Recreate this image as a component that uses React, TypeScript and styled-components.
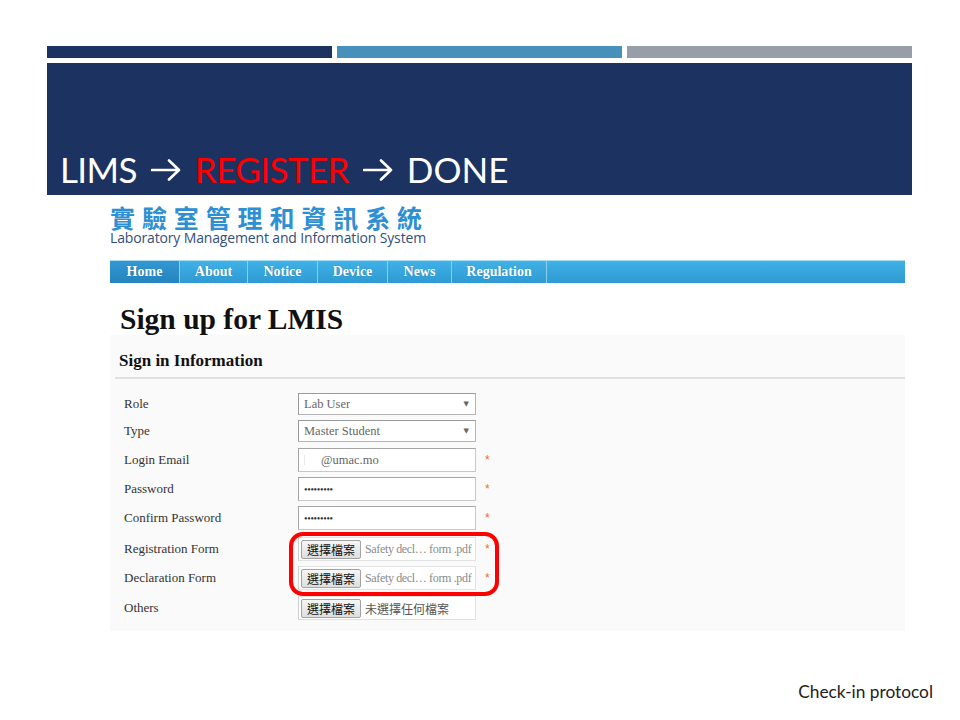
import React from "react";
import styled, { createGlobalStyle } from "styled-components";

const Global = createGlobalStyle`
  html, body { margin: 0; padding: 0; background: #fff; }
  body { font-family: "Liberation Serif", serif; }
`;

const Slide = styled.div`
  position: relative;
  width: 960px;
  height: 720px;
  box-sizing: border-box;
  padding-top: 46px;
  display: flex;
  flex-direction: column;
  overflow: hidden;
  background: #fff;
`;

const TopBars = styled.div`
  display: flex;
  gap: 5px;
  margin: 0 48px 0 47px;
  height: 12px;
`;

const Bar = styled.div<{ $c: string }>`
  flex: 1;
  background: ${(p) => p.$c};
`;

const TitleBox = styled.div`
  margin: 5px 48px 0 47px;
  height: 132px;
  box-sizing: border-box;
  background: #1c3260;
  display: flex;
  align-items: flex-end;
  padding: 0 0 8px 13px;
`;

const TitleText = styled.div`
  display: flex;
  align-items: center;
  gap: 14px;
  font-family: Lato, "Open Sans", sans-serif;
  font-size: 35px;
  line-height: 1;
  color: #fff;
`;

const Word = styled.span<{ $red?: boolean; $ls?: number }>`
  color: ${(p) => (p.$red ? "#ff0000" : "#fff")};
  letter-spacing: ${(p) => (p.$ls ?? -0.6)}px;
`;

const Arrow = () => (
  <svg width="30" height="22" viewBox="0 0 30 22" fill="none">
    <path d="M1 11H28M18 1.5L28 11L18 20.5" stroke="#fff" strokeWidth="2.6" strokeLinecap="round" strokeLinejoin="round" />
  </svg>
);

const Content = styled.div`
  padding: 10px 55px 0 110px;
`;

const Logo = styled.div`
  display: flex;
  flex-direction: column;
`;

const LogoCn = styled.div`
  font-family: "Noto Sans CJK TC", sans-serif;
  font-weight: 700;
  font-size: 25px;
  line-height: 25px;
  height: 25px;
  letter-spacing: 6.9px;
  color: #2f8fd3;
`;

const LogoEn = styled.div`
  font-family: "Open Sans", "Liberation Sans", sans-serif;
  font-size: 14px;
  line-height: 16px;
  color: #33507a;
  letter-spacing: -0.15px;
`;

const Nav = styled.nav`
  margin-top: 14px;
  height: 23px;
  display: flex;
  background: linear-gradient(#3fb2e8, #2f99d2);
  border-top: 1px solid #a9dcf3;
  box-sizing: border-box;
`;

const NavItem = styled.div<{ $active?: boolean; $w: number }>`
  width: ${(p) => p.$w}px;
  display: flex;
  align-items: center;
  justify-content: center;
  box-sizing: border-box;
  font-family: "Liberation Serif", serif;
  font-weight: 700;
  font-size: 14px;
  color: #fff;
  border-right: 1px solid #8bd0f2;
  background: ${(p) => (p.$active ? "linear-gradient(#3298d2, #2583bd)" : "transparent")};
  text-shadow: 0 0 1px rgba(0, 60, 110, 0.4);
`;

const PageTitle = styled.h1`
  margin: 0;
  padding: 19px 0 0 10px;
  height: 52px;
  box-sizing: border-box;
  font-family: "Liberation Serif", serif;
  font-weight: 700;
  font-size: 29.5px;
  line-height: 34px;
  color: #111;
`;

const Panel = styled.section`
  background: #fafafa;
  padding-bottom: 11px;
`;

const PanelHead = styled.h3`
  margin: 0 0 0 5px;
  height: 44px;
  box-sizing: border-box;
  padding: 16px 0 0 4px;
  border-bottom: 2px solid #e0e0e0;
  font-family: "Liberation Serif", serif;
  font-weight: 700;
  font-size: 17px;
  line-height: 20px;
  color: #111;
`;

const Form = styled.div`
  display: flex;
  flex-direction: column;
  gap: 5px;
  padding: 14px 0 0 14px;
`;

const Row = styled.div<{ $mt?: number }>`
  display: grid;
  grid-template-columns: 174px 178px 14px;
  align-items: center;
  margin-top: ${(p) => p.$mt ?? 0}px;
`;

const Label = styled.div`
  font-family: "Liberation Serif", serif;
  font-size: 13px;
  color: #333;
`;

const Select = styled.div`
  height: 22px;
  box-sizing: border-box;
  border: 1px solid #b5b5b5;
  border-top-color: #9a9a9a;
  border-left-color: #9a9a9a;
  background: #fff;
  display: flex;
  align-items: center;
  justify-content: space-between;
  padding: 0 6px 0 5px;
  font-family: "Liberation Serif", serif;
  font-size: 12.5px;
  color: #666;
`;

const Caret = styled.span`
  font-family: "DejaVu Sans", sans-serif;
  font-size: 7px;
  color: #666;
`;

const TextInput = styled.div`
  height: 24px;
  box-sizing: border-box;
  border: 1px solid #c8c8c8;
  border-top-color: #a5a5a5;
  border-left-color: #a5a5a5;
  background: #fff;
  display: flex;
  align-items: center;
  padding-left: 5px;
  font-family: "Liberation Serif", serif;
  font-size: 12.5px;
  color: #666;
`;

const Hidden = styled.span`
  display: inline-block;
  width: 16px;
  height: 10px;
  border-left: 1px solid #e8e8e8;
`;

const Dots = styled.span`
  font-size: 10px;
  letter-spacing: -0.3px;
  color: #333;
`;

const FileBox = styled.div`
  height: 24px;
  box-sizing: border-box;
  border: 1px solid #e2e2e2;
  border-left-color: #cfcfcf;
  background: #fff;
  display: flex;
  align-items: center;
  gap: 4px;
  padding-left: 2px;
  white-space: nowrap;
  overflow: hidden;
`;

const FileButton = styled.span`
  height: 19px;
  box-sizing: border-box;
  padding: 0 5px;
  display: flex;
  align-items: center;
  border: 1px solid #a3a3a3;
  border-radius: 2px;
  background: linear-gradient(#f6f6f6, #dedede);
  font-family: "Noto Sans CJK TC", sans-serif;
  font-size: 12px;
  color: #111;
`;

const FileName = styled.span<{ $cjk?: boolean }>`
  font-family: ${(p) => (p.$cjk ? '"Noto Sans CJK TC", sans-serif' : '"Liberation Serif", serif')};
  font-size: 12px;
  letter-spacing: ${(p) => (p.$cjk ? "0" : "-0.35px")};
  color: ${(p) => (p.$cjk ? "#555" : "#8a8a8a")};
`;

const Required = styled.span`
  padding-left: 9px;
  font-family: "Liberation Sans", sans-serif;
  font-size: 12px;
  color: #f26d2c;
  margin-top: -1px;
`;

const Highlight = styled.div`
  position: absolute;
  left: 289px;
  top: 532px;
  width: 210px;
  height: 64px;
  box-sizing: border-box;
  border: 4px solid #ff0000;
  border-radius: 14px;
  pointer-events: none;
`;

const Footer = styled.div`
  margin-top: auto;
  padding: 0 27px 18px 0;
  text-align: right;
  font-family: Lato, "Open Sans", sans-serif;
  font-size: 17.3px;
  color: #222;
`;

const navItems: [string, number][] = [
  ["Home", 70],
  ["About", 68],
  ["Notice", 70],
  ["Device", 70],
  ["News", 64],
  ["Regulation", 95],
];

type Field =
  | { kind: "select"; label: string; value: string; mt?: number }
  | { kind: "email"; label: string; mt?: number }
  | { kind: "password"; label: string; mt?: number }
  | { kind: "file"; label: string; file?: string; req: boolean; mt?: number };

const fields: Field[] = [
  { kind: "select", label: "Role", value: "Lab User" },
  { kind: "select", label: "Type", value: "Master Student" },
  { kind: "email", label: "Login Email", mt: 1 },
  { kind: "password", label: "Password" },
  { kind: "password", label: "Confirm Password" },
  { kind: "file", label: "Registration Form", file: "Safety decl… form .pdf", req: true, mt: 2 },
  { kind: "file", label: "Declaration Form", file: "Safety decl… form .pdf", req: true },
  { kind: "file", label: "Others", req: false, mt: 1 },
];

function renderControl(f: Field) {
  switch (f.kind) {
    case "select":
      return (
        <Select>
          <span>{f.value}</span>
          <Caret>▼</Caret>
        </Select>
      );
    case "email":
      return (
        <TextInput>
          <Hidden />
          @umac.mo
        </TextInput>
      );
    case "password":
      return (
        <TextInput>
          <Dots>•••••••••</Dots>
        </TextInput>
      );
    case "file":
      return (
        <FileBox>
          <FileButton>選擇檔案</FileButton>
          {f.file ? <FileName>{f.file}</FileName> : <FileName $cjk>未選擇任何檔案</FileName>}
        </FileBox>
      );
  }
}

function hasStar(f: Field) {
  if (f.kind === "select") return false;
  if (f.kind === "file") return f.req;
  return true;
}

export default function App() {
  return (
    <>
      <Global />
      <Slide>
        <TopBars>
          <Bar $c="#1c3260" />
          <Bar $c="#4690bb" />
          <Bar $c="#979ea7" />
        </TopBars>
        <TitleBox>
          <TitleText>
            <Word>LIMS</Word>
            <Arrow />
            <Word $red>REGISTER</Word>
            <Arrow />
            <Word $ls={0}>DONE</Word>
          </TitleText>
        </TitleBox>
        <Content>
          <Logo>
            <LogoCn>實驗室管理和資訊系統</LogoCn>
            <LogoEn>Laboratory Management and Information System</LogoEn>
          </Logo>
          <Nav>
            {navItems.map(([n, w], i) => (
              <NavItem key={n} $w={w} $active={i === 0}>
                {n}
              </NavItem>
            ))}
          </Nav>
          <PageTitle>Sign up for LMIS</PageTitle>
          <Panel>
            <PanelHead>Sign in Information</PanelHead>
            <Form>
              {fields.map((f) => (
                <Row key={f.label} $mt={f.mt}>
                  <Label>{f.label}</Label>
                  {renderControl(f)}
                  {hasStar(f) ? <Required>*</Required> : <span />}
                </Row>
              ))}
            </Form>
          </Panel>
        </Content>
        <Footer>Check-in protocol</Footer>
        <Highlight />
      </Slide>
    </>
  );
}
